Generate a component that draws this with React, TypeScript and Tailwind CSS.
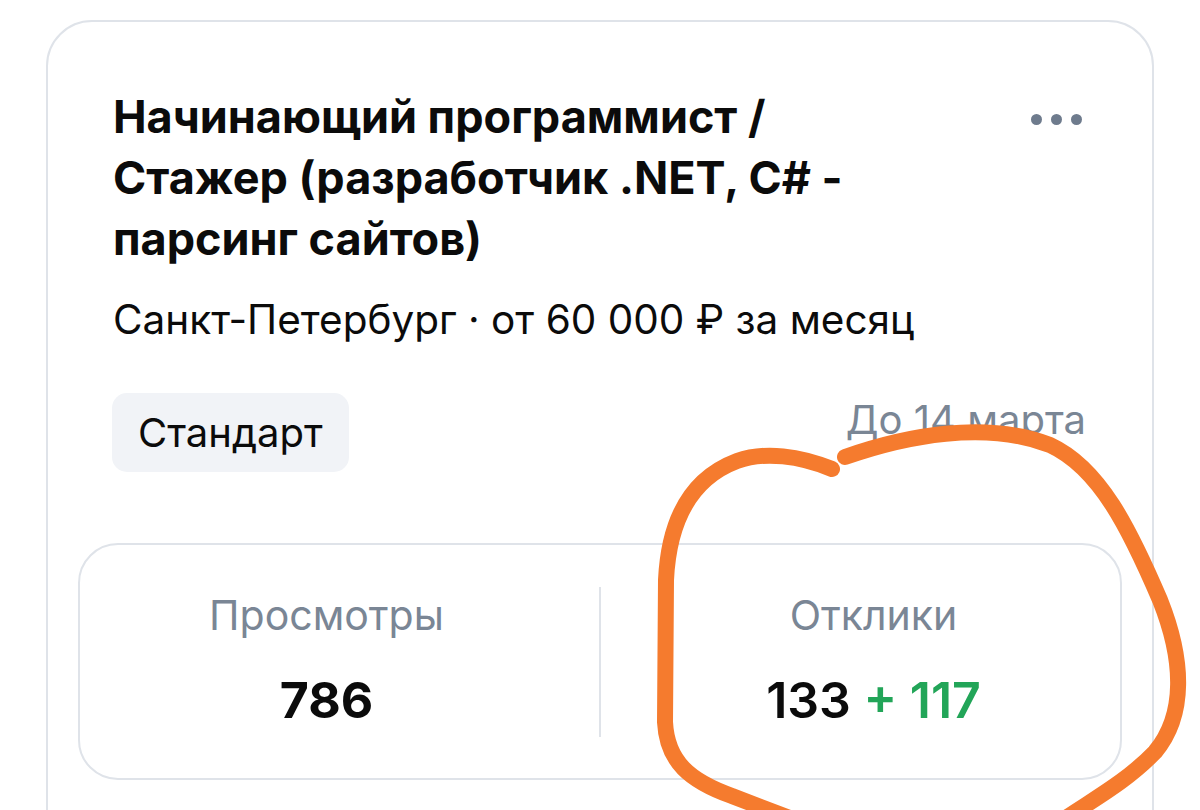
import React from 'react';

function MoreDots() {
  return (
    <div className="flex items-center gap-[9px] pt-[28px]">
      <span className="w-[11px] h-[11px] rounded-full bg-[#6e7b8d]" />
      <span className="w-[11px] h-[11px] rounded-full bg-[#6e7b8d]" />
      <span className="w-[11px] h-[11px] rounded-full bg-[#6e7b8d]" />
    </div>
  );
}

function Stat({ label, children, side }: { label: string; children: React.ReactNode; side: 'left' | 'right' }) {
  return (
    <div className={`flex-1 flex flex-col items-center pt-[46px] ${side === 'left' ? 'pr-[26px]' : 'pl-[26px]'}`}>
      <div className="text-[41px] leading-[48px] text-[#7a8695]">{label}</div>
      <div className="mt-[33px] text-[50px] leading-[56px]">{children}</div>
    </div>
  );
}

// hand-drawn marker circle around the responses block
function Scribble() {
  return (
    <svg className="absolute inset-0 pointer-events-none" width="1200" height="810" viewBox="0 0 1200 810">
      <g fill="none" stroke="#f57b2e" strokeWidth="16" strokeLinecap="round" strokeLinejoin="round">
        <path d="M832 469 C 800 456, 765 451, 737 461 C 692 478, 669 518, 666 580 L 665 722 C 667 762, 690 781, 732 796 L 800 822" />
        <path d="M845 457 C 905 436, 985 420, 1050 445 C 1100 468, 1130 530, 1160 600 C 1184 660, 1186 715, 1155 752 C 1125 783, 1092 800, 1060 822" />
      </g>
    </svg>
  );
}

export default function App() {
  return (
    <div className="relative h-[810px] overflow-hidden bg-white text-[#0b0b0b]" style={{ fontFamily: 'Inter, "Noto Sans", sans-serif' }}>
      <div className="ml-[46px] mt-[20px] w-[1108px] h-[900px] rounded-[46px] border-2 border-[#dfe3e9] px-[30px] pt-[64px]">
        <div className="grid grid-cols-[1fr_auto] items-start pl-[35px] pr-[40px]">
          <h1 className="text-[45px] leading-[61px] font-bold">
            <div className="whitespace-nowrap">Начинающий программист /</div>
            <div className="whitespace-nowrap">Стажер (разработчик .NET, C# -</div>
            <div className="whitespace-nowrap">парсинг сайтов)</div>
          </h1>
          <MoreDots />
        </div>

        <p className="pl-[35px] mt-[27px] text-[40.5px] leading-[48px] whitespace-nowrap">
          Санкт-Петербург · от 60 000 ₽ за месяц
        </p>

        <div className="flex justify-between items-start pl-[34px] pr-[36px] mt-[49px]">
          <div className="h-[79px] px-[26px] flex items-center rounded-[15px] bg-[#f1f3f7] text-[40px]">
            Стандарт
          </div>
          <div className="mt-[3px] text-[40px] leading-[48px] text-[#7a8695]">До 14 марта</div>
        </div>

        <div className="mt-[71px] h-[237px] rounded-[40px] border-2 border-[#dfe3e9] flex">
          <Stat label="Просмотры" side="left">
            <span className="font-bold">786</span>
          </Stat>
          <div className="w-[2px] self-center h-[150px] bg-[#dfe3e9]" />
          <Stat label="Отклики" side="right">
            <span className="font-semibold">133</span>
            <span className="font-semibold text-[#22a558]"> + 117</span>
          </Stat>
        </div>
      </div>
      <Scribble />
    </div>
  );
}
